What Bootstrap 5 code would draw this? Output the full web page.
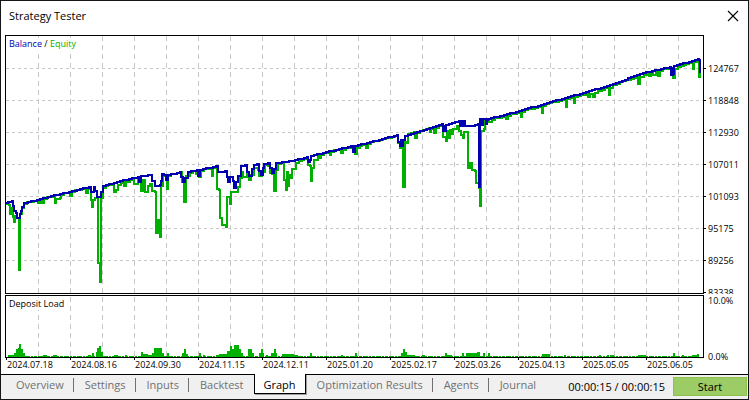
<!DOCTYPE html>
<html lang="en">
<head>
<meta charset="utf-8">
<meta name="viewport" content="width=device-width, initial-scale=1">
<title>Strategy Tester</title>
<link href="https://cdn.jsdelivr.net/npm/bootstrap@5.3.0/dist/css/bootstrap.min.css" rel="stylesheet">
<style>
  body { font-family: "Open Sans", "Noto Sans", sans-serif; font-size: 11px; line-height: 16px; color: #000; background: #fff; }
  .tester { min-height: 100vh; border: 1px solid #16161a; }
  .title-bar { height: 34px; padding: 0 7px 5px 8px; }
  .title-bar h1 { font-size: 11px; line-height: 16px; font-weight: 400; }
  .close-btn { width: 16px; height: 16px; line-height: 0; }
  .small-type { font-size: 9px; line-height: 12px; }
  .charts { display: grid; grid-template-columns: minmax(0, 1fr) 40px; row-gap: 1px; padding: 0 4px; }
  .plot { border: 1px solid #000; line-height: 0; display: grid; align-self: start; }
  .plot > * { grid-area: 1 / 1; }
  .plot svg { width: 100%; display: block; }
  .caption { z-index: 1; justify-self: start; align-self: start; margin-left: 3px; margin-top: 2px; background: #fff; }
  .balance-key { color: #0000b0; }
  .equity-key { color: #00b000; }
  .value-axis { padding-top: 17px; height: 259px; overflow: hidden; }
  .value-axis li { height: 32px; line-height: 34px; padding-left: 4px; background: linear-gradient(#000, #000) 0 16px / 2px 1px no-repeat; }
  .load-axis { padding-left: 4px; height: 68px; }
  .date-axis { height: 16px; padding: 0 4px; margin-top: -5px; }
  .date-axis li { flex: 0 0 64px; padding: 1px 0 0 2px; white-space: nowrap; background: linear-gradient(#000, #000) 1px 0 / 1px 2px no-repeat; }
  .bottom-bar { background: #f0f0f0; border-top: 1px solid #000; flex: 1 0 24px; }
  .tester-tabs { margin-top: -1px; padding-left: 4px; }
  .tester-tabs button { height: 20px; padding: 1px 10px 0 11px; line-height: 16px; color: #707070; background: linear-gradient(#707070, #707070) 100% 4px / 1px 14px no-repeat; border: 0; white-space: nowrap; }
  .tester-tabs .plain { background: none; }
  .tester-tabs .active { color: #000; background: #fff; border: solid #000; border-width: 0 1px 1px; padding: 2px 9px 0; box-shadow: 1px 1px 0 #a0a0a0; }
  .clock { padding-top: 4px; white-space: nowrap; margin-right: 8px; }
  .start-btn { width: 74px; height: 19px; line-height: 16px; background: #9ccc65; border: 1px solid #8bc34a; margin: 2px 1px 0 0; padding: 0; }
</style>
<script src="https://cdn.jsdelivr.net/npm/bootstrap@5.3.0/dist/js/bootstrap.bundle.min.js"></script>
</head>
<body>
<main class="tester d-flex flex-column">
  <header class="title-bar d-flex align-items-center justify-content-between">
    <h1 class="m-0">Strategy Tester</h1>
    <button type="button" class="close-btn border-0 bg-transparent p-0" aria-label="Close">
      <svg width="16" height="16" viewBox="0 0 16 16"><path d="M3 3 L13 13 M13 3 L3 13" stroke="#000" stroke-width="1.1" fill="none"/></svg>
    </button>
  </header>

  <section class="charts">
    <div class="plot">
      <div class="caption small-type"><span class="balance-key">Balance</span> / <span class="equity-key">Equity</span></div>
      <svg viewBox="6 36 697 257" shape-rendering="crispEdges" role="img" aria-label="Balance and equity">
        <g id="grid" stroke="#c8c8c8" fill="none"></g>
        <path id="equity" stroke="#00b000" stroke-width="2" fill="none"/>
        <path id="balance" stroke="#0000b0" stroke-width="2" fill="none"/>
      </svg>
    </div>
    <ul class="value-axis small-type list-unstyled m-0">
      <li>124767</li><li>118848</li><li>112930</li><li>107011</li><li>101093</li><li>95175</li><li>89256</li><li>83338</li>
    </ul>
    <div class="plot">
      <div class="caption small-type">Deposit Load</div>
      <svg viewBox="6 296 697 61" shape-rendering="crispEdges" role="img" aria-label="Deposit load">
        <g id="loadGrid" stroke="#c8c8c8" fill="none"></g>
        <path d="M8 356.5H699" stroke="#00b000" stroke-dasharray="3 1 5 1 2 1" fill="none"/>
        <path id="load" fill="#00b000"/>
      </svg>
    </div>
    <div class="load-axis small-type d-flex flex-column justify-content-between"><span>10.0%</span><span>0.0%</span></div>
  </section>

  <ul class="date-axis small-type list-unstyled d-flex mb-0">
    <li>2024.07.18</li><li>2024.08.16</li><li>2024.09.30</li><li>2024.11.15</li><li>2024.12.11</li><li>2025.01.20</li><li>2025.02.17</li><li>2025.03.26</li><li>2025.04.13</li><li>2025.05.05</li><li>2025.06.05</li>
  </ul>

  <footer class="bottom-bar d-flex align-items-start">
    <nav class="tester-tabs d-flex me-auto">
      <button type="button">Overview</button><button type="button">Settings</button><button type="button">Inputs</button><button type="button" class="plain">Backtest</button><button type="button" class="active">Graph</button><button type="button">Optimization Results</button><button type="button">Agents</button><button type="button" class="plain">Journal</button>
    </nav>
    <span class="clock">00:00:15 / 00:00:15</span>
    <button type="button" class="start-btn">Start</button>
  </footer>
</main>
<script>
  const balance = [6,203,8,202,12,201,13,206,14,211,16,213,17,218,19,218,20,214,21,211,22,207,24,203,28,202,60,194,89,187,91,192,93,192,94,187,95,191,97,197,100,197,101,192,103,186,120,181,138,177,139,182,141,176,151,175,152,181,155,186,160,185,161,181,162,174,164,175,166,180,168,175,180,172,181,177,183,182,185,178,188,172,197,170,198,176,200,170,216,166,218,172,225,171,227,177,228,182,230,177,233,181,234,188,236,182,238,176,241,166,245,165,247,172,249,176,252,169,254,165,257,164,259,171,261,175,263,168,264,164,268,163,270,168,272,173,274,169,276,163,292,161,307,157,308,162,310,160,311,156,351,146,353,152,354,146,354,152,355,146,397,135,398,142,400,146,401,139,401,146,403,140,405,136,442,124,443,131,444,126,445,131,446,125,455,122,459,121,460,126,461,121,462,126,463,121,464,126,464,121,465,126,472,126,478,124,479,187,480,187,480,119,482,125,483,119,486,124,487,120,488,119,519,111,550,102,583,93,610,85,643,73,670,67,671,75,672,67,672,75,673,67,673,74,674,66,698,59,699,60,700,73];
  const equity = [6,204,9,205,10,214,12,208,13,217,14,222,15,216,17,218,19,218,19,270,20,270,20,214,22,208,24,204,37,201,38,203,40,201,42,203,44,199,54,197,55,203,56,199,60,198,61,195,69,193,70,196,72,192,85,189,86,193,88,188,90,189,91,200,92,207,93,200,95,198,98,198,98,263,100,263,100,282,101,282,101,198,103,188,108,186,113,185,114,192,116,190,118,185,123,183,124,186,126,182,133,180,134,184,138,179,141,191,143,180,145,192,148,186,150,184,152,191,155,192,156,233,157,220,158,233,159,220,160,237,161,237,161,186,163,176,166,180,167,189,168,176,180,173,182,182,184,182,184,202,186,176,193,172,199,178,201,171,210,169,212,176,213,168,216,168,217,189,219,190,220,218,222,225,226,227,227,225,227,197,229,197,230,204,231,192,235,192,238,187,240,178,242,172,243,177,247,172,249,180,251,175,254,168,258,170,259,176,262,172,265,165,268,166,270,173,272,174,274,191,276,170,278,164,283,163,284,180,286,190,287,172,288,186,289,175,290,178,292,169,296,163,307,159,308,165,310,166,311,181,312,168,314,160,318,156,319,158,321,155,329,153,330,155,331,152,340,150,341,153,343,150,351,148,355,154,357,148,365,145,366,148,368,144,395,137,398,143,400,148,403,149,403,187,404,187,405,142,407,143,408,134,414,133,415,138,417,133,429,129,430,132,431,129,434,133,436,128,442,126,443,137,446,141,447,131,449,138,450,130,452,134,453,129,457,126,459,131,461,135,463,138,464,132,468,133,468,168,470,163,472,170,475,171,476,183,479,188,480,206,481,131,484,129,485,121,489,122,492,120,505,117,506,119,508,116,520,113,521,117,522,112,541,107,542,113,543,106,565,100,566,107,567,99,573,98,574,103,575,97,587,95,588,97,590,94,593,97,595,93,608,88,609,95,610,88,620,83,637,78,638,84,640,77,647,74,649,76,651,73,653,75,656,72,658,76,660,71,670,69,672,75,673,78,675,69,692,63,693,69,694,62,698,60,699,77,700,72];
  /* x, width, height of each deposit-load bar */
  const bars = [8,6,2,14,2,4,16,2,8,18,1,9,19,2,13,21,2,8,23,2,4,43,4,2,53,4,2,88,3,2,92,2,4,96,2,5,97,2,9,99,2,11,101,2,5,114,4,2,125,2,2,141,2,5,143,5,3,148,5,2,152,2,4,154,8,9,162,2,4,167,2,4,182,3,4,184,2,8,186,2,3,199,2,4,203,2,2,216,6,2,219,9,3,227,3,6,230,2,11,232,2,8,234,5,12,239,2,8,241,2,4,248,4,8,252,2,4,259,5,4,261,2,8,266,2,2,271,6,4,274,2,8,282,12,3,294,4,2,310,2,4,341,2,2,355,2,4,401,2,4,403,2,8,405,2,5,407,8,2,422,3,2,445,2,4,447,5,2,462,2,4,466,14,4,477,3,5,483,2,4,488,2,4,542,8,3,564,2,2,599,2,2,607,2,2,610,4,2,638,8,2,673,2,4,682,2,2,692,6,2,697,2,3];

  /* Staircase path: long slopes become three-pixel treads, moved up by lift */
  function stairs(p, lift) {
    let d = `M${p[0]} ${p[1]}`;
    for (let i = 2; i < p.length; i += 2) {
      const [x0, y0, x1, y1] = p.slice(i - 2, i + 2);
      const n = Math.max(1, Math.round((x1 - x0) / 3));
      const up = n > 1 ? lift : 0;
      for (let k = 1; k <= n; k++)
        d += `H${Math.round(x0 + (x1 - x0) * k / n)}V${Math.round(y0 + (y1 - y0) * k / n) - up}`;
    }
    return d;
  }
  function columns(top, bottom) {
    let d = '';
    for (let x = 38.5; x < 703; x += 32) d += `M${x} ${top}V${bottom}`;
    return `<path d="${d}" stroke-dasharray="5 4"/>`;
  }
  let rows = '';
  for (let y = 68.5; y < 290; y += 32) rows += `M6 ${y}H703`;
  document.getElementById('grid').innerHTML = columns(36, 293) + `<path d="${rows}" stroke-dasharray="3 3"/>`;
  document.getElementById('loadGrid').innerHTML = columns(297, 357);
  document.getElementById('balance').setAttribute('d', stairs(balance, 0));
  document.getElementById('equity').setAttribute('d', stairs(equity, 1));
  let b = '';
  for (let i = 0; i < bars.length; i += 3) b += `M${bars[i]} 357v${-bars[i + 2]}h${bars[i + 1]}V357z`;
  document.getElementById('load').setAttribute('d', b);
</script>
</body>
</html>
